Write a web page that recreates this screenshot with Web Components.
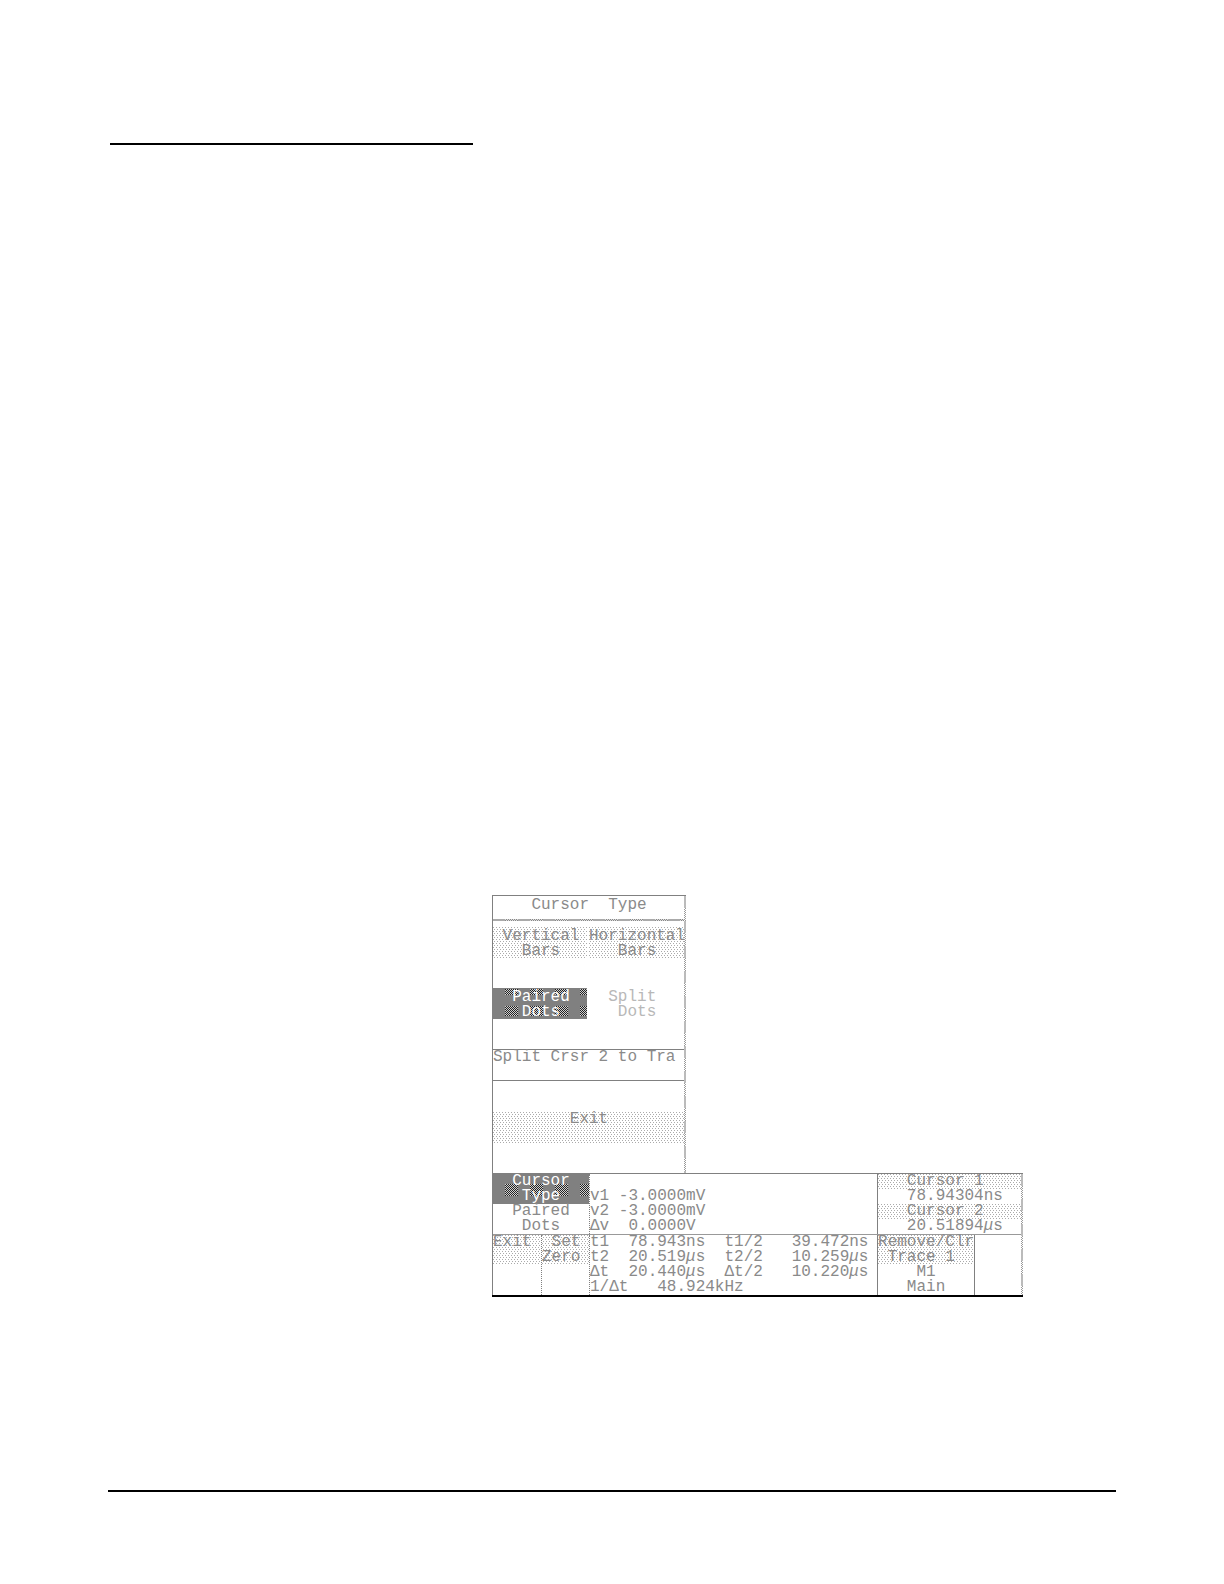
<!DOCTYPE html>
<html lang="en">
<head>
<meta charset="utf-8">
<meta name="viewport" content="width=device-width, initial-scale=1">
<title>Cursor Type</title>
<style>
  html, body {
    margin: 0;
    background: #fff;
  }
</style>
</head>
<body>
<manual-page></manual-page>

<script>
// Two-tone checkerboard, used wherever the display dithers
const mesh = (a, b) => `conic-gradient(${a} 25%, ${b} 0 50%, ${a} 0 75%, ${b} 0) 0 0 / 2px 2px`;

class SoftKey extends HTMLElement {
  constructor() {
    super();

    const shadowRoot = this.attachShadow({ mode: 'open' });

    shadowRoot.innerHTML = `
      <style>
        :host {
          display: block;
          white-space: normal;
        }

        button {
          display: flex;
          align-items: flex-start;
          box-sizing: border-box;
          width: 100%;
          height: 100%;
          margin: 0;
          padding: var(--key-pad, 0) 0 0;
          border: 0;
          border-radius: 0;
          font: inherit;
          color: inherit;
          text-align: left;
          background:
            conic-gradient(from 0deg at 1px 1px, transparent 75%, #ababab 0) 0 0 / 3px 4px,
            conic-gradient(from 0deg at 1px 1px, transparent 75%, #ababab 0) 1px 2px / 3px 4px;
        }

        span {
          white-space: pre;
        }

        :host([selected]) button {
          color: #fff;
          background:
            repeating-linear-gradient(90deg, #808080 0 12px, transparent 12px 25px),
            var(--bands, linear-gradient(#808080 10px, transparent 0 22px, #808080 0)),
            ${mesh('#222', '#d0d0d0')};
        }

        button:disabled {
          color: #b8b8b8;
          background: none;
        }
      </style>
      <button type="button"><span><slot></slot></span></button>
    `;

    shadowRoot.querySelector('button').disabled = this.hasAttribute('disabled');
  }
}

customElements.define('soft-key', SoftKey);

class CursorMenu extends HTMLElement {
  constructor() {
    super();

    const shadowRoot = this.attachShadow({ mode: 'open' });

    shadowRoot.innerHTML = `
      <style>
        :host {
          display: flex;
          box-sizing: border-box;
          width: calc(20ch + 2px);
          border: 1px solid #808080;
          border-width: 1px 0 0 1px;
        }

        .body {
          flex: 1;
          min-width: 0;
        }

        .edge {
          width: 2px;
          background:
            repeating-linear-gradient(#bbb 0 12px, transparent 12px 25px),
            ${mesh('#999', '#fff')};
        }

        h1 {
          margin: 0;
          height: 23px;
          font: inherit;
          line-height: 19px;
          white-space: pre;
        }

        .rule {
          height: 2px;
          background:
            repeating-linear-gradient(90deg, #aaa 0 12px, transparent 12px 25px),
            ${mesh('#888', '#ddd')};
        }

        .keys {
          display: grid;
          grid-template-columns: 10ch minmax(0, 1fr);
          grid-auto-rows: 31px;
          row-gap: 30px;
          padding: 6px 0 30px;
          --key-pad: 2px;
        }

        .keys > :nth-child(odd) {
          margin-right: 2px;
        }

        .message {
          margin: 0;
          height: 30px;
          border: 1px solid #808080;
          border-width: 1px 0;
          white-space: pre;
        }

        .exit {
          height: 31px;
          margin: 31px 0 30px;
        }
      </style>
      <div class="body">
        <h1>    Cursor  Type</h1>
        <div class="rule"></div>
        <div class="keys">
          <soft-key> Vertical<br>   Bars</soft-key>
          <soft-key>Horizontal<br>   Bars</soft-key>
          <soft-key selected style="--bands: linear-gradient(#808080 1px, transparent 0 7px, #808080 0 18px, transparent 0 28px, #808080 0)">  Paired<br>   Dots</soft-key>
          <soft-key disabled>  Split<br>   Dots</soft-key>
        </div>
        <p class="message">Split Crsr 2 to Tra</p>
        <soft-key class="exit">        Exit</soft-key>
      </div>
      <div class="edge"></div>
    `;
  }
}

customElements.define('cursor-menu', CursorMenu);

class CursorReadout extends HTMLElement {
  constructor() {
    super();

    const shadowRoot = this.attachShadow({ mode: 'open' });

    shadowRoot.innerHTML = `
      <style>
        :host {
          display: block;
          border-bottom: 2px solid #000;
        }

        .frame {
          display: flex;
          border: 1px solid #808080;
          border-width: 1px 0 0 1px;
        }

        .grid {
          display: grid;
          grid-template-columns: 10ch 30ch 15ch;
          grid-template-rows: 60px 60px;
          row-gap: 1px;
          background: #999;
        }

        .edge {
          width: 2px;
          background:
            repeating-linear-gradient(#bbb 0 12px, transparent 12px 25px),
            ${mesh('#999', '#fff')};
        }

        .cell {
          background: #fff;
        }

        .values {
          border-left: 1px dotted #808080;
        }

        .side {
          border-left: 1px solid #808080;
        }

        .voltage {
          padding-top: 15px;
        }

        .split {
          display: grid;
          grid-template-columns: 5ch minmax(0, 1fr);
        }

        .split.wide {
          grid-template-columns: 10ch minmax(0, 1fr);
        }

        .split > :last-child {
          border-left: 1px dotted #808080;
        }

        .split.wide > :last-child {
          border-left: 1px solid #808080;
        }

        .tall {
          height: 30px;
        }

        output {
          display: block;
          white-space: pre;
        }

        table {
          border-collapse: collapse;
          table-layout: fixed;
          width: 29ch;
        }

        .voltage table {
          width: 13ch;
        }

        th, td {
          padding: 0;
          height: 15px;
          font-weight: normal;
          text-align: left;
          white-space: pre;
        }

        .label {
          width: 3ch;
        }

        .time .label {
          width: 4ch;
        }

        .first {
          width: 10ch;
        }

        .half {
          width: 7ch;
        }
      </style>
      <div class="frame">
        <div class="grid">
          <div class="cell">
            <soft-key selected class="tall">  Cursor<br>   Type</soft-key>
            <output>  Paired<br>   Dots</output>
          </div>
          <div class="cell values voltage">
            <table>
              <tr><th class="label" scope="row">v1</th><td>-3.0000mV</td></tr>
              <tr><th scope="row">v2</th><td>-3.0000mV</td></tr>
              <tr><th scope="row">Δv</th><td> 0.0000V</td></tr>
            </table>
          </div>
          <div class="cell side">
            <soft-key>   Cursor 1</soft-key>
            <output>   78.94304ns</output>
            <soft-key>   Cursor 2</soft-key>
            <output>   20.51894<i>μ</i>s</output>
          </div>
          <div class="cell split">
            <div><soft-key class="tall">Exit</soft-key></div>
            <div><soft-key class="tall"> Set<br>Zero</soft-key></div>
          </div>
          <div class="cell values time">
            <table>
              <tr><th class="label" scope="row">t1</th><td class="first">78.943ns</td><th class="half" scope="row">t1/2</th><td>39.472ns</td></tr>
              <tr><th scope="row">t2</th><td>20.519<i>μ</i>s</td><th scope="row">t2/2</th><td>10.259<i>μ</i>s</td></tr>
              <tr><th scope="row">Δt</th><td>20.440<i>μ</i>s</td><th scope="row">Δt/2</th><td>10.220<i>μ</i>s</td></tr>
              <tr><th scope="row">1/Δt</th><td colspan="3">   48.924kHz</td></tr>
            </table>
          </div>
          <div class="cell side split wide">
            <div>
              <soft-key class="tall">Remove/Clr<br> Trace 1</soft-key>
              <output>    M1<br>   Main</output>
            </div>
            <div></div>
          </div>
        </div>
        <div class="edge"></div>
      </div>
    `;
  }
}

customElements.define('cursor-readout', CursorReadout);

class ManualPage extends HTMLElement {
  constructor() {
    super();

    const shadowRoot = this.attachShadow({ mode: 'open' });

    shadowRoot.innerHTML = `
      <style>
        :host {
          display: flex;
          flex-direction: column;
          box-sizing: border-box;
          min-height: 100vh;
          padding: 143px 108px 92px;
          font: 16px/15px "Liberation Mono", monospace;
          color: #8a8a8a;
        }

        hr {
          margin: 0;
          border: 0;
          height: 2px;
          background: #000;
        }

        .top {
          width: 36%;
          margin-left: 2px;
        }

        .bottom {
          margin-top: auto;
        }

        main {
          padding-top: 750px;
          width: max-content;
          margin-left: 384px;
        }
      </style>
      <hr class="top">
      <main>
        <cursor-menu></cursor-menu>
        <cursor-readout></cursor-readout>
      </main>
      <hr class="bottom">
    `;
  }
}

customElements.define('manual-page', ManualPage);
</script>
</body>
</html>
